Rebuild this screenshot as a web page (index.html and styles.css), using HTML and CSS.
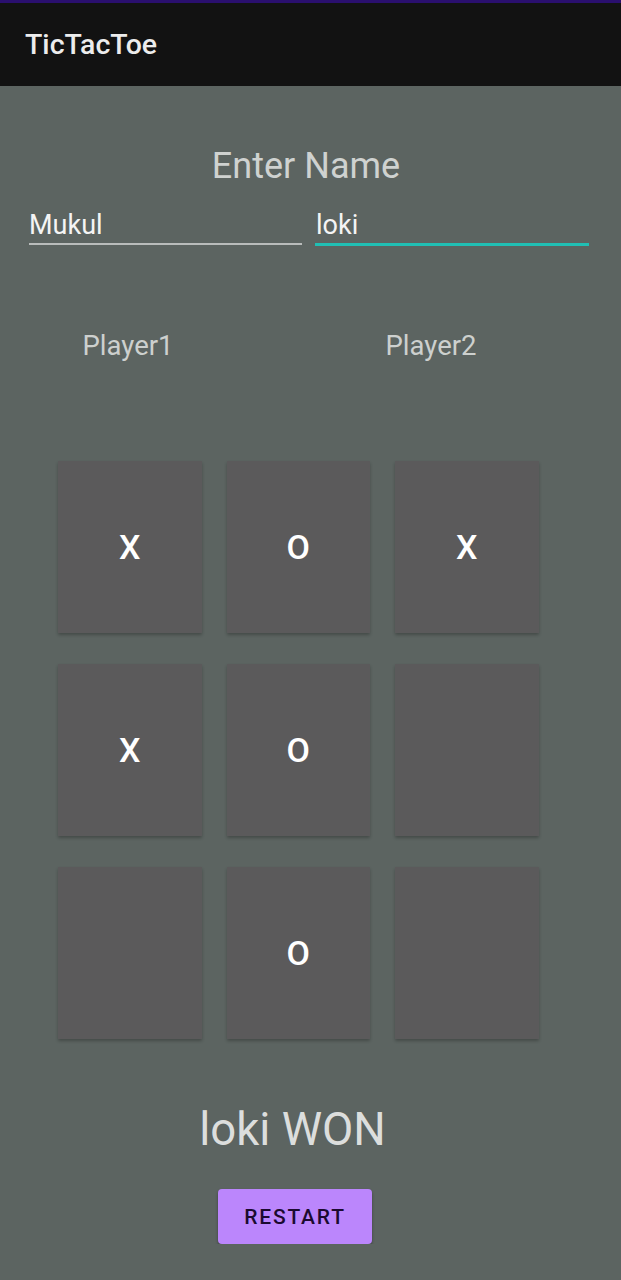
FILE: index.html
```html
<!DOCTYPE html>
<html>
<head>
<meta charset="utf-8">
<link rel="stylesheet" href="styles.css">
</head>
<body>
<div class="status"></div>
<header class="appbar"><span class="title">TicTacToe</span></header>
<main class="content">
  <div class="heading">Enter Name</div>
  <div class="inputs">
    <div class="field"><span>Mukul</span></div>
    <div class="field active"><span>loki</span></div>
  </div>
  <div class="players">
    <div class="player">Player1</div>
    <div class="player">Player2</div>
  </div>
  <div class="board">
    <div class="cell">X</div>
    <div class="cell">O</div>
    <div class="cell">X</div>
    <div class="cell">X</div>
    <div class="cell">O</div>
    <div class="cell"></div>
    <div class="cell"></div>
    <div class="cell">O</div>
    <div class="cell"></div>
  </div>
  <div class="result">loki WON</div>
  <div class="actions"><button class="restart">RESTART</button></div>
</main>
</body>
</html>
```
FILE: styles.css
```css
html, body {
  margin: 0;
  padding: 0;
  background: #5c6461;
  font-family: Roboto, "Noto Sans", sans-serif;
}
.status {
  height: 3px;
  background: #2a0f6e;
}
.appbar {
  height: 83px;
  background: #121212;
  display: flex;
  align-items: center;
  padding-left: 25px;
}
.title {
  color: #ececec;
  font-size: 28.5px;
  font-weight: 500;
  margin-top: -1px;
}
.content {
  display: flex;
  flex-direction: column;
}
.heading {
  margin-top: 62px;
  text-align: center;
  font-size: 36px;
  color: #cfd2d0;
  line-height: 36px;
  margin-left: -9px;
}
.inputs {
  display: flex;
  gap: 13px;
  padding: 0 32px 0 29px;
  margin-top: 21px;
}
.field {
  flex: 1;
  height: 40px;
  border-bottom: 2px solid #b9bcbb;
  color: #f4f4f4;
  font-size: 27px;
  display: flex;
  align-items: flex-end;
  padding-bottom: 2px;
  box-sizing: border-box;
}
.field.active {
  border-bottom: 3px solid #20bfb4;
  height: 41px;
  padding-left: 1px;
}
.players {
  display: flex;
  gap: 103px;
  margin-top: 85px;
  padding-left: 28px;
}
.player {
  width: 200px;
  text-align: center;
  color: #cdd0ce;
  font-size: 27.5px;
  line-height: 30px;
}
.board {
  margin: 100px 0 0 58px;
  display: grid;
  grid-template-columns: repeat(3, 143.5px);
  grid-auto-rows: 172px;
  column-gap: 25px;
  row-gap: 31px;
}
.cell {
  background: #5b5a5b;
  box-shadow: 0 2px 3px rgba(0,0,0,0.25);
  color: #ffffff;
  font-size: 34px;
  font-weight: 500;
  display: flex;
  align-items: center;
  justify-content: center;
}
.result {
  margin-top: 66px;
  text-align: center;
  font-size: 45.5px;
  color: #dcdedd;
  line-height: 50px;
  margin-left: -36px;
}
.actions {
  display: flex;
  justify-content: center;
  margin-top: 34px;
  margin-left: -31px;
}
.restart {
  width: 154px;
  height: 55px;
  background: #bb86fc;
  border: none;
  border-radius: 4px;
  box-shadow: 0 2px 3px rgba(0,0,0,0.35);
  color: #1b0a30;
  font-family: Roboto, sans-serif;
  font-size: 21px;
  font-weight: 500;
  letter-spacing: 1.8px;
  padding: 0;
}
```
